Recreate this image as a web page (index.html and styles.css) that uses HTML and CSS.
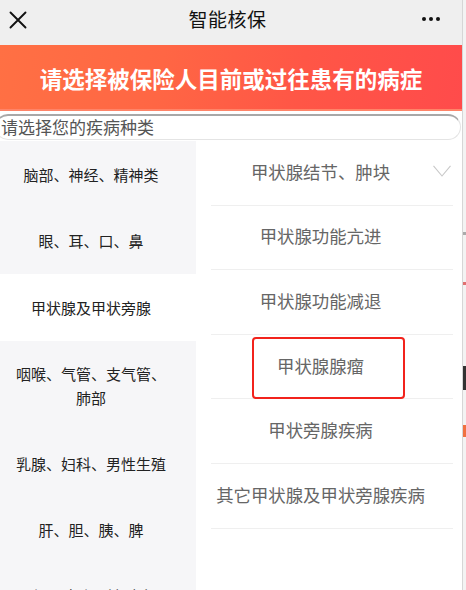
FILE: index.html
```html
<!DOCTYPE html>
<html lang="zh-CN">
<head>
<meta charset="utf-8">
<title>智能核保</title>
<link rel="stylesheet" href="styles.css">
</head>
<body>
<div class="screen">
  <div class="main">
    <header class="nav">
      <svg class="nav-close" width="18" height="18" viewBox="0 0 18 18"><path d="M1.5 1.5 L16.5 16.5 M16.5 1.5 L1.5 16.5" stroke="#111" stroke-width="1.9" fill="none" stroke-linecap="round"/></svg>
      <div class="nav-title">智能核保</div>
      <div class="nav-more"><span></span><span></span><span></span></div>
    </header>
    <div class="banner">请选择被保险人目前或过往患有的病症</div>
    <div class="search">请选择您的疾病种类</div>
    <div class="content">
      <ul class="cats">
        <li class="cat">脑部、神经、精神类</li>
        <li class="cat">眼、耳、口、鼻</li>
        <li class="cat active">甲状腺及甲状旁腺</li>
        <li class="cat">咽喉、气管、支气管、肺部</li>
        <li class="cat">乳腺、妇科、男性生殖</li>
        <li class="cat">肝、胆、胰、脾</li>
        <li class="cat">肾、膀胱、前列腺</li>
      </ul>
      <ul class="items">
        <li class="item"><span class="item-text">甲状腺结节、肿块</span><svg class="chev" width="18" height="12" viewBox="0 0 18 12"><path d="M0.5 0.8 L9 11 L17.5 0.8" stroke="#c8c8c8" stroke-width="1.1" fill="none"/></svg></li>
        <li class="item"><span class="item-text">甲状腺功能亢进</span></li>
        <li class="item"><span class="item-text">甲状腺功能减退</span></li>
        <li class="item"><span class="item-text">甲状腺腺瘤</span><span class="mark"></span></li>
        <li class="item"><span class="item-text">甲状旁腺疾病</span></li>
        <li class="item"><span class="item-text">其它甲状腺及甲状旁腺疾病</span></li>
      </ul>
    </div>
  </div>
  <div class="edge"></div>
</div>
</body>
</html>
```
FILE: styles.css
```css
* { box-sizing: border-box; }
html, body { margin: 0; padding: 0; }
body {
  width: 466px;
  height: 590px;
  overflow: hidden;
  background: #fff;
  font-family: "Noto Sans CJK SC", "Noto Sans", sans-serif;
}
.screen { display: flex; width: 466px; height: 590px; }
.main { width: 462px; display: flex; flex-direction: column; overflow: hidden; }
.edge {
  width: 4px;
  border-left: 1px solid #d6d6d6;
  background:
    linear-gradient(#333, #333) 0 366px / 100% 24px no-repeat,
    linear-gradient(#f07040, #f07040) 0 425px / 100% 12px no-repeat,
    linear-gradient(#e07070, #e07070) 0 282px / 100% 3px no-repeat,
    linear-gradient(#aaa, #aaa) 0 232px / 100% 3px no-repeat,
    #f3f3f3;
}

.nav {
  height: 45px;
  flex: none;
  background: #efefef;
  display: grid;
  grid-template-columns: 1fr auto 1fr;
  align-items: center;
  padding: 0 22px 0 9px;
}
.nav-close { display: block; margin-top: -6px; }
.nav-title { font-size: 19px; color: #111; margin-top: -8px; margin-left: 6px; letter-spacing: 0.5px; }
.nav-more { justify-self: end; display: flex; gap: 3px; margin-top: -8px; }
.nav-more span { width: 4px; height: 4px; border-radius: 50%; background: #111; }

.banner {
  height: 66px;
  flex: none;
  background: linear-gradient(100deg, #ff7044 0%, #ff6644 35%, #ff5646 65%, #ff4b4b 100%);
  border-bottom: 2px solid #ff8468;
  color: #fff;
  font-weight: 700;
  font-size: 22.5px;
  display: flex;
  align-items: center;
  justify-content: center;
  padding-top: 2px;
  white-space: nowrap;
}

.search {
  height: 26px;
  flex: none;
  margin: 3px 1px 0 -5px;
  padding-left: 5px;
  border: 1px solid #e4e4e4;
  border-top: 2px solid #a8a8a8;
  border-radius: 13px;
  background: #fff;
  color: #555;
  font-size: 17px;
  line-height: 22px;
  white-space: nowrap;
}

.content { flex: 1; display: flex; margin-top: 1px; }
.cats {
  list-style: none;
  margin: 0;
  padding: 0;
  width: 196px;
  flex: none;
  background: #f6f6f8;
}
.cat {
  padding: 21px 24px 21px 10px;
  text-align: center;
  font-size: 15px;
  line-height: 24px;
  color: #222;
}
.cat:first-child { padding-top: 22px; }
.cat.active { background: #fff; padding-top: 22px; }

.items {
  list-style: none;
  margin: 0;
  padding: 0 9px 0 15px;
  flex: 1;
  background: #fff;
}
.item {
  position: relative;
  height: 64.6px;
  border-bottom: 1px solid #efefef;
  display: grid;
  grid-template-columns: 1fr 20px;
  align-items: center;
  color: #666;
  font-size: 17.4px;
}
.item-text { text-align: center; white-space: nowrap; margin-top: -3px; padding-right: 3px; }
.chev { display: block; margin-top: -4px; }
.mark {
  position: absolute;
  left: 41px;
  top: 2px;
  width: 153px;
  height: 62px;
  border: 2px solid #f2231c;
  border-radius: 4px;
}
```
